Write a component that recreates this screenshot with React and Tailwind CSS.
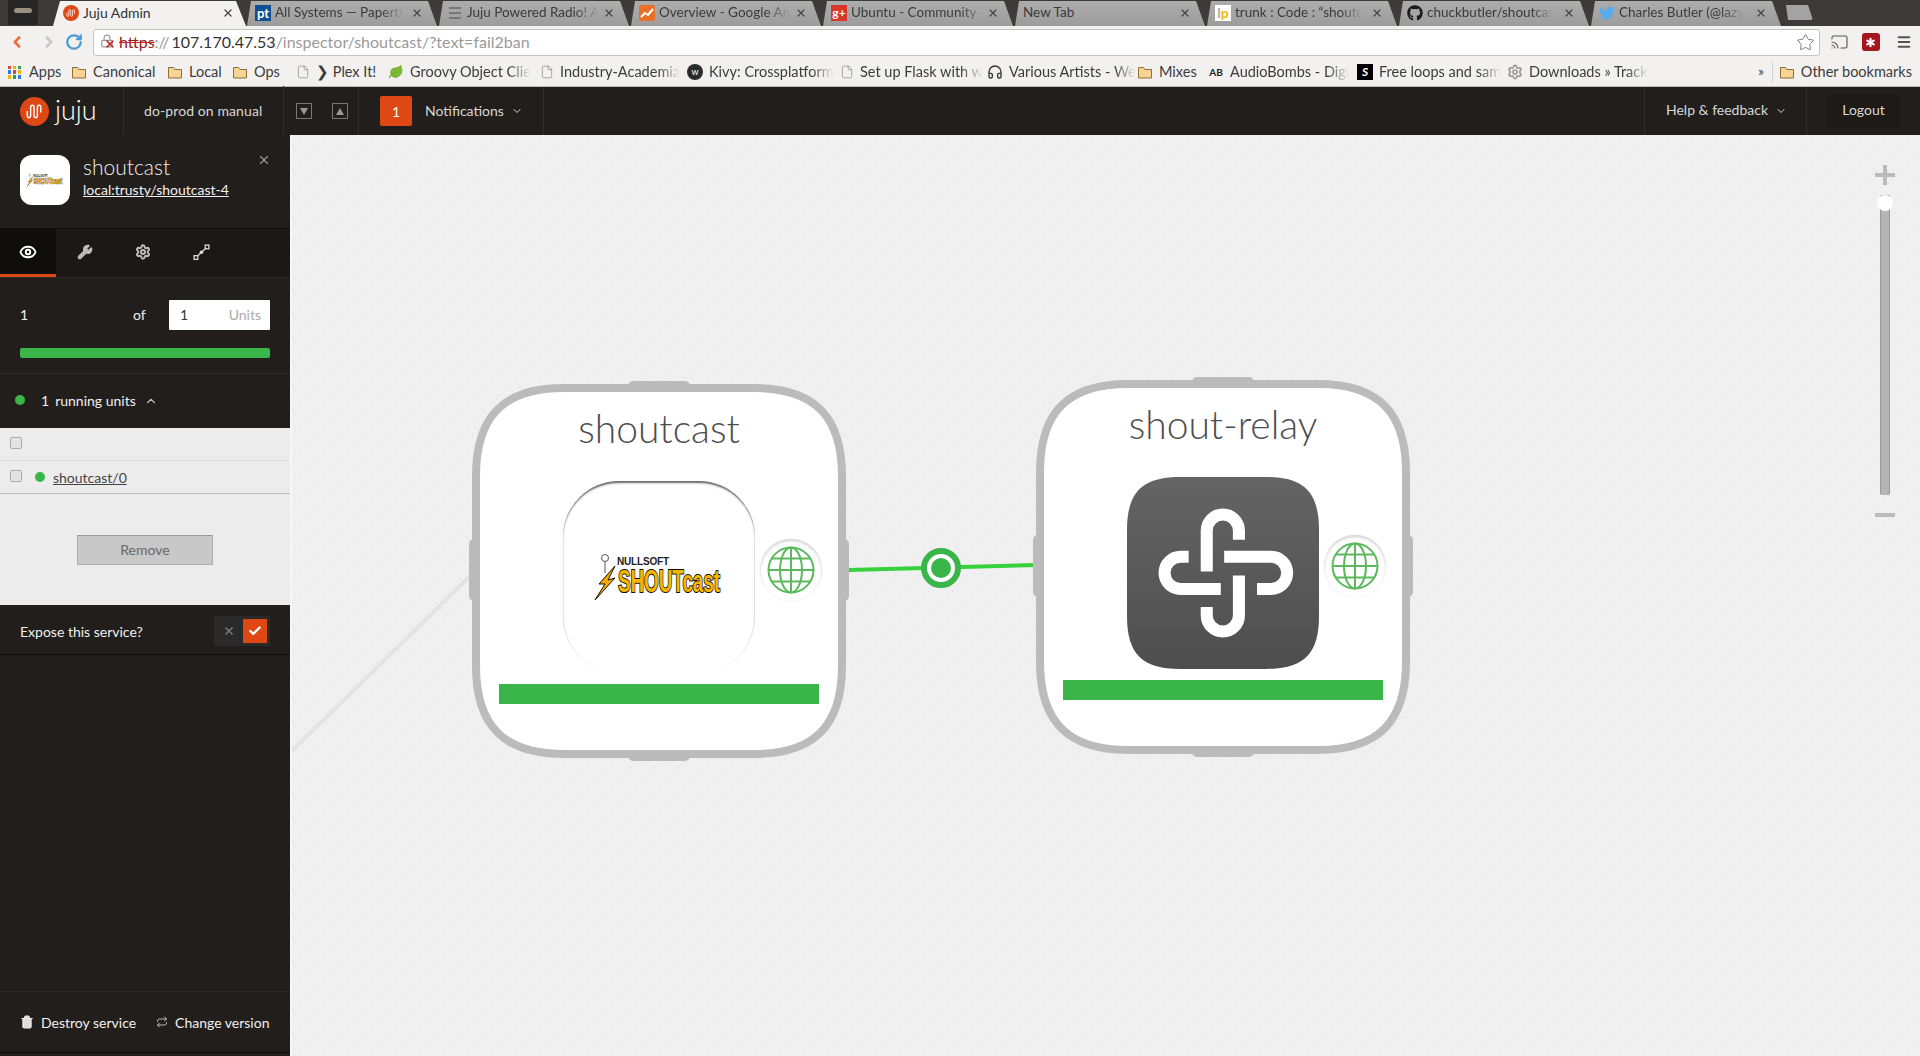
import React from 'react';
import { ChevronLeft, ChevronRight, ChevronDown, ChevronUp, RotateCw, Star, Cast, Menu, X, Eye, Wrench, Settings, Trash2, Repeat, Check, Lock, File, Headphones, Leaf, Asterisk } from 'lucide-react';
import { FaGithub, FaTwitter } from 'react-icons/fa';

const fade = '[mask-image:linear-gradient(to_right,black_82%,transparent)]';

const tabs = [
  { title: 'All Systems — Papertr', icon: 'pt' },
  { title: 'Juju Powered Radio! A', icon: 'lines' },
  { title: 'Overview - Google An', icon: 'ga' },
  { title: 'Ubuntu - Community -', icon: 'gplus' },
  { title: 'New Tab', icon: null },
  { title: 'trunk : Code : “shoutc', icon: 'lp' },
  { title: 'chuckbutler/shoutcas', icon: 'github' },
  { title: 'Charles Butler (@lazy', icon: 'twitter' },
];

const bookmarks = [
  { label: 'Canonical', icon: 'folder', w: 'w-[96px]' },
  { label: 'Local', icon: 'folder', w: 'w-[65px]' },
  { label: 'Ops', icon: 'folder', w: 'w-[64px]' },
  { label: '❯ Plex It!', icon: 'doc', w: 'w-[92px]' },
  { label: 'Groovy Object Clie', icon: 'leaf', w: 'w-[152px]', cut: true },
  { label: 'Industry-Academia', icon: 'doc', w: 'w-[147px]', cut: true },
  { label: 'Kivy: Crossplatform', icon: 'kivy', w: 'w-[153px]', cut: true },
  { label: 'Set up Flask with w', icon: 'doc', w: 'w-[147px]', cut: true },
  { label: 'Various Artists - We', icon: 'phones', w: 'w-[150px]', cut: true },
  { label: 'Mixes', icon: 'folder', w: 'w-[71px]' },
  { label: 'AudioBombs - Digi', icon: 'ab', w: 'w-[149px]', cut: true },
  { label: 'Free loops and sam', icon: 'loops', w: 'w-[150px]', cut: true },
  { label: 'Downloads » Track', icon: 'gear', w: 'w-[136px]', cut: true },
];

function JujuMark({ className }) {
  return (
    <svg viewBox="0 0 30 30" className={className}>
      <circle cx="15" cy="15" r="15" fill="#dd4814" />
      <path d="M7.5 15v4.5c0 2.5 3.5 2.5 3.5 0v-9c0-2.500 3.500-2.500 3.500 0v9c0 2.500 3.500 2.500 3.500 0v-9c0-2.500 3.500-2.500 3.500 0v5" fill="none" stroke="#fff" strokeWidth="1.5" strokeLinecap="round" />
    </svg>
  );
}

function Favicon({ kind }) {
  if (kind === 'pt') {
    return <div className="w-4 h-4 bg-[#0e4f96] text-white text-[13px] leading-4 font-bold text-center">pt</div>;
  }
  if (kind === 'lines') {
    return (
      <div className="w-4 h-4 flex flex-col justify-center gap-[3px] px-[2px]">
        <div className="h-[2px] bg-[#777]" />
        <div className="h-[2px] bg-[#777]" />
        <div className="h-[2px] bg-[#777]" />
      </div>
    );
  }
  if (kind === 'ga') {
    return (
      <svg viewBox="0 0 16 16" className="w-4 h-4">
        <rect width="16" height="16" rx="2" fill="#e8702a" />
        <path d="M2 12l4-4 3 2 5-6" fill="none" stroke="#fff" strokeWidth="2" />
      </svg>
    );
  }
  if (kind === 'gplus') {
    return <div className="w-4 h-4 bg-[#d9362a] text-white text-[12px] leading-4 font-bold text-center">g+</div>;
  }
  if (kind === 'lp') {
    return <div className="w-4 h-4 bg-white text-[#f5b400] text-[14px] leading-4 font-bold text-center"><span className="text-[#aaa]">l</span>p</div>;
  }
  if (kind === 'github') return <FaGithub className="w-4 h-4 text-[#1b1b1b]" />;
  if (kind === 'twitter') return <FaTwitter className="w-4 h-4 text-[#55acee]" />;
  return null;
}

function BookmarkIcon({ kind }) {
  if (kind === 'folder') {
    return (
      <svg viewBox="0 0 16 16" className="w-4 h-4 shrink-0">
        <path d="M1.500 3.500h5l1.500 2h6.500v8.500h-13z" fill="#f6d493" stroke="#8f6c34" />
      </svg>
    );
  }
  if (kind === 'doc') return <File className="w-[14px] h-4 shrink-0 text-[#888]" strokeWidth={1.2} />;
  if (kind === 'leaf') return <Leaf className="w-4 h-4 shrink-0 text-[#6aa82c] fill-[#7cba35]" strokeWidth={1} />;
  if (kind === 'kivy') {
    return <div className="w-4 h-4 shrink-0 rounded-full bg-[#2b2b2b] text-white text-[9px] leading-4 text-center">w</div>;
  }
  if (kind === 'phones') return <Headphones className="w-4 h-4 shrink-0 text-[#333]" strokeWidth={2} />;
  if (kind === 'ab') return <div className="w-4 h-4 shrink-0 text-[10px] leading-4 font-bold text-[#222] text-center">AB</div>;
  if (kind === 'loops') return <div className="w-4 h-4 shrink-0 bg-black text-white text-[12px] leading-4 font-bold italic text-center">S</div>;
  if (kind === 'gear') return <Settings className="w-4 h-4 shrink-0 text-[#999]" strokeWidth={2.500} />;
  return null;
}

function Tab({ tab }) {
  return (
    <div className="w-[192px] h-[25px] shrink-0 flex items-center pl-[9px] pr-[8px] pb-[2px] bg-gradient-to-b from-[#adadad] to-[#9c9c9c] text-[#3a3a3a] [clip-path:polygon(5px_0,calc(100%-10px)_0,calc(100%-1px)_100%,1px_100%)]">
      {tab.icon ? <div className="w-4 shrink-0 mr-[4px]"><Favicon kind={tab.icon} /></div> : null}
      <span className={`whitespace-nowrap text-[13.500px] ${tab.icon ? fade : ''}`}>{tab.title}</span>
      <X className="w-3 h-3 ml-auto mr-[7px] text-[#444]" strokeWidth={2.500} />
    </div>
  );
}

function ChromeBars() {
  return (
    <>
      {/* tab strip */}
      <div className="h-[26px] bg-[#3c3b37] flex items-end overflow-hidden">
        <div className="w-[53px] h-full shrink-0 pl-[8px]">
          <div className="w-[30px] h-[25px] bg-[#262626] rounded-b-[3px] flex justify-center pt-[8px]">
            <div className="w-[18px] h-[5px] bg-[#9b8f80] rounded-sm" />
          </div>
        </div>
        <div className="w-[193px] h-[25px] shrink-0 flex items-center pl-[10px] pr-[8px] pb-[2px] bg-[#f2f1f0] text-[#333] [clip-path:polygon(7px_0,calc(100%-10px)_0,100%_100%,0_100%)]">
          <JujuMark className="w-4 h-4 mr-[4px] shrink-0" />
          <span className="text-[14px] whitespace-nowrap">Juju Admin</span>
          <X className="w-3 h-3 ml-auto mr-[4px] text-[#444]" strokeWidth={2.500} />
        </div>
        {tabs.map((tab) => <Tab key={tab.title} tab={tab} />)}
        <div className="w-[30px] h-[15px] ml-[1px] mb-[6px] shrink-0 bg-[#a3a3a3] rounded-[3px] [clip-path:polygon(3px_0,calc(100%-5px)_0,100%_100%,5px_100%)]" />
      </div>

      {/* address bar */}
      <div className="h-[32px] bg-[#f2f1f0] flex items-center pl-[8px] pr-[8px]">
        <ChevronLeft className="w-[18px] h-[22px] text-[#e8743b]" strokeWidth={3.500} />
        <ChevronRight className="w-[18px] h-[22px] ml-[14px] text-[#c8c8c8]" strokeWidth={3.500} />
        <RotateCw className="w-[18px] h-[18px] ml-[7px] text-[#4d9ad4]" strokeWidth={3} />
        <div className="w-[1728px] h-[27px] ml-[10px] bg-white border border-[#c4c4c4] rounded-[3px] flex items-center pl-[6px] pr-[4px] text-[16px] whitespace-nowrap">
          <div className="relative w-[16px] h-[16px] shrink-0 mr-[3px]">
            <Lock className="w-[14px] h-[14px] text-[#999]" />
            <X className="absolute left-[4px] top-[4px] w-[12px] h-[12px] text-[#b22]" strokeWidth={3} />
          </div>
          <span className="text-[#8f2020] line-through decoration-[#c22]">https</span>
          <span className="text-[#999]">://</span>
          <span className="text-[#333] ml-[2px]">107.170.47.53</span>
          <span className="text-[#9a9a9a]">/inspector/shoutcast/?text=fail2ban</span>
          <Star className="w-[19px] h-[19px] ml-auto text-[#777]" strokeWidth={1.200} />
        </div>
        <Cast className="w-[19px] h-[18px] ml-[10px] text-[#555]" strokeWidth={1.500} />
        <div className="w-[18px] h-[18px] ml-[13px] bg-[#a3161e] rounded-[3px] flex items-center justify-center">
          <Asterisk className="w-[15px] h-[15px] text-white" strokeWidth={3.500} />
        </div>
        <Menu className="w-[16px] h-[20px] ml-[16px] text-[#555]" strokeWidth={3} />
      </div>

      {/* bookmarks */}
      <div className="h-[29px] bg-[#f2f1f0] border-b border-[#b9b9b9] flex items-center pl-[8px] pr-[8px] text-[14.500px] text-[#3c3c3c]">
        <div className="w-[63px] flex items-center gap-[8px] shrink-0">
          <div className="w-[13px] h-[13px] shrink-0 grid grid-cols-3 gap-[1.500px]">
            <div className="bg-[#e0453a]" /><div className="bg-[#f4b400]" /><div className="bg-[#2f9e55]" />
            <div className="bg-[#2f7de1]" /><div className="bg-[#e0453a]" /><div className="bg-[#f4b400]" />
            <div className="bg-[#f4b400]" /><div className="bg-[#2f9e55]" /><div className="bg-[#2f7de1]" />
          </div>
          <span>Apps</span>
        </div>
        {bookmarks.map((b) => (
          <div key={b.label} className={`${b.w} shrink-0 flex items-center gap-[6px]`}>
            <BookmarkIcon kind={b.icon} />
            <span className={`whitespace-nowrap ${b.cut ? fade : ''}`}>{b.label}</span>
          </div>
        ))}
        <span className="ml-auto mr-[8px] text-[13px]">»</span>
        <div className="border-l border-[#d4d4d4] pl-[6px] flex items-center gap-[6px]">
          <BookmarkIcon kind="folder" />
          <span className="whitespace-nowrap">Other bookmarks</span>
        </div>
      </div>
    </>
  );
}

function TopBar() {
  return (
    <div className="h-[48px] bg-[#221e1b] flex text-[14px] text-[#d8d8d8]">
      <div className="w-[124px] border-r border-[#322e2b] flex items-center pl-[20px] gap-[6px]">
        <JujuMark className="w-[29px] h-[29px]" />
        <span className="text-[27px] leading-none font-light text-white -mt-[4px]">juju</span>
      </div>
      <div className="w-[160px] border-r border-[#322e2b] flex items-center pl-[20px] -mt-[1px] tracking-[0.1px]">do-prod on manual</div>
      <div className="w-[75px] border-r border-[#322e2b] flex items-center pl-[12px] gap-[20px]">
        <div className="w-4 h-4 border border-[#777] flex items-center justify-center"><div className="border-x-[4px] border-x-transparent border-t-[7px] border-t-[#999]" /></div>
        <div className="w-4 h-4 border border-[#777] flex items-center justify-center"><div className="border-x-[4px] border-x-transparent border-b-[7px] border-b-[#999]" /></div>
      </div>
      <div className="w-[185px] border-r border-[#322e2b] flex items-center pl-[21px]">
        <div className="w-[32px] h-[30px] bg-[#dd4814] rounded-[2px] flex items-center justify-center text-white">1</div>
        <span className="ml-[13px] -mt-[2px]">Notifications</span>
        <ChevronDown className="w-[12px] h-[12px] ml-[7px]" />
      </div>
      <div className="flex-1" />
      <div className="w-[162px] border-l border-[#322e2b] flex items-center pl-[21px]">
        <span className="-mt-[3px]">Help &amp; feedback</span>
        <ChevronDown className="w-[12px] h-[12px] ml-[7px]" />
      </div>
      <div className="w-[114px] border-l border-[#322e2b] flex items-center pl-[20px]">
        <div className="w-[73px] h-[34px] bg-[#1d1a18] flex items-center justify-center -mt-[1px] pb-[2px]">Logout</div>
      </div>
    </div>
  );
}

function ShoutLogo({ className }) {
  return (
    <svg viewBox="0 0 128 46" className={`overflow-visible ${className}`}>
      <path d="M20 12L4 30l6 0L0 46l20-22-7 2z" fill="#f5a800" stroke="#111" strokeWidth="1" />
      <circle cx="10" cy="4" r="3.500" fill="none" stroke="#555" strokeWidth="1" />
      <path d="M10 7v12" stroke="#555" strokeWidth="1" />
      <text x="22" y="11" fontSize="10" fontWeight="700" fontFamily="'Liberation Sans',sans-serif" fill="#222" textLength="52">NULLSOFT</text>
      <text x="23" y="38" fontSize="31" fontWeight="700" fontFamily="'Liberation Sans',sans-serif" fill="#f7b500" stroke="#111" strokeWidth="2" paintOrder="stroke" textLength="102" lengthAdjust="spacingAndGlyphs">SHOUTcast</text>
    </svg>
  );
}

function RelationIcon() {
  return (
    <svg viewBox="0 0 16 16" className="w-[17px] h-[17px]" fill="none" stroke="#ddd" strokeWidth="1.200">
      <rect x="1" y="11" width="3.500" height="3.500" />
      <rect x="11.500" y="1" width="3.500" height="3.500" />
      <path d="M4.500 11L11.500 4.500" />
      <circle cx="8" cy="7.800" r="1.700" fill="#ddd" stroke="none" />
    </svg>
  );
}

function Sidebar() {
  return (
    <div className="w-[292px] shrink-0 box-border border-r-2 border-[#f7f7f7] bg-[#221e1b] flex flex-col text-[14px] text-[#f0f0f0]">
      <div className="h-[93px] shrink-0 flex items-start pt-[20px] pl-[20px] pr-[20px]">
        <div className="w-[50px] h-[50px] bg-white rounded-[12px] flex items-center justify-center shrink-0">
          <ShoutLogo className="w-[36px] h-[14px]" />
        </div>
        <div className="ml-[13px]">
          <div className="text-[21px] leading-[26px] font-light -mt-[1px]">shoutcast</div>
          <a className="underline leading-[20px] block">local:trusty/shoutcast-4</a>
        </div>
        <X className="w-[14px] h-[14px] ml-auto -mt-[2px] mr-[-1px] text-[#999]" strokeWidth={2} />
      </div>
      <div className="h-[49px] shrink-0 bg-[#1b1815] border-t border-[#0f0d0c] flex">
        <div className="w-[56px] border-b-[3px] border-[#dd4814] bg-[#100e0d] flex items-center justify-center">
          <Eye className="w-[18px] h-[18px] text-white" strokeWidth={2.500} />
        </div>
        <div className="w-[58px] flex items-center justify-center -mt-[2px]"><Wrench className="w-4 h-4 text-[#bbb] fill-[#bbb]" /></div>
        <div className="w-[58px] flex items-center justify-center -mt-[2px]"><Settings className="w-4 h-4 text-[#bbb]" strokeWidth={3} /></div>
        <div className="w-[58px] flex items-center justify-center -mt-[2px]"><RelationIcon /></div>
      </div>
      <div className="h-[96px] shrink-0 border-t border-[#2e2a27] px-[20px] pt-[22px]">
        <div className="flex items-center h-[30px]">
          <span className="w-[113px] -mt-[2px]">1</span>
          <span className="-mt-[2px]">of</span>
          <div className="w-[101px] h-[30px] ml-auto bg-white rounded-[1px] flex items-center justify-between pl-[11px] pr-[9px] pb-[2px] text-[#333]">
            <span>1</span>
            <span className="text-[#aaa]">Units</span>
          </div>
        </div>
        <div className="h-[10px] mt-[18px] bg-[#39b54a] rounded-[2px]" />
      </div>
      <div className="h-[55px] shrink-0 border-t border-[#2e2a27] flex items-center pl-[15px]">
        <div className="w-[10px] h-[10px] rounded-full bg-[#39b54a] -mt-[3px]" />
        <span className="ml-[16px] -mt-[1px]">1</span>
        <span className="ml-[6px] -mt-[1px]">running units</span>
        <ChevronUp className="w-[14px] h-[14px] ml-[8px] text-[#bbb]" />
      </div>
      <div className="h-[177px] shrink-0 bg-[#ececec] text-[#444]">
        <div className="h-[33px] border-b border-[#dcdcdc] flex items-center pl-[10px] pb-[3px]">
          <div className="w-[12px] h-[12px] rounded-[2px] border border-[#aaa] bg-[#e4e4e4]" />
        </div>
        <div className="h-[33px] border-b border-[#bdbdbd] flex items-center pl-[10px] pb-[3px]">
          <div className="w-[12px] h-[12px] rounded-[2px] border border-[#aaa] bg-[#e4e4e4]" />
          <div className="w-[10px] h-[10px] ml-[13px] mt-[3px] rounded-full bg-[#39b54a]" />
          <a className="ml-[8px] mt-[4px] underline">shoutcast/0</a>
        </div>
        <div className="flex justify-center pt-[41px]">
          <div className="w-[136px] h-[30px] bg-[#c8c8c8] border border-[#adadad] border-t-[#999] rounded-[1px] flex items-center justify-center pb-[2px] text-[#666]">Remove</div>
        </div>
      </div>
      <div className="h-[50px] shrink-0 border-b border-[#0f0d0c] flex items-center px-[20px] pt-[3px]">
        <span className="mt-[1px]">Expose this service?</span>
        <div className="w-[56px] h-[30px] ml-auto bg-[#2a2a2a] rounded-[2px] flex items-center pl-[9px]">
          <X className="w-[12px] h-[12px] text-[#777]" strokeWidth={3.500} />
          <div className="w-[24px] h-[24px] ml-[8px] bg-[#dd4814] flex items-center justify-center">
            <Check className="w-[14px] h-[14px] text-white" strokeWidth={4} />
          </div>
        </div>
      </div>
      <div className="flex-1" />
      <div className="h-[62px] shrink-0 mb-[3px] border-t border-[#2e2a27] border-b-[#0f0d0c] border-b flex items-center pl-[20px]">
        <Trash2 className="w-[14px] h-[14px] text-[#eee] fill-[#ddd]" />
        <span className="ml-[7px]">Destroy service</span>
        <Repeat className="w-[12px] h-[12px] ml-[20px] text-[#bbb]" />
        <span className="ml-[7px]">Change version</span>
      </div>
    </div>
  );
}

function Squircle() {
  return (
    <svg viewBox="0 0 374 374" className="absolute inset-0 w-full h-full overflow-visible">
      <g fill="#bbb">
        <rect x="156" y="-3" width="62" height="12" rx="5" />
        <rect x="156" y="365" width="62" height="12" rx="5" />
        <rect x="-3" y="155" width="12" height="62" rx="5" />
        <rect x="365" y="155" width="12" height="62" rx="5" />
      </g>
      <path d="M92 4H282C342 4 370 32 370 92V282C370 342 342 370 282 370H92C32 370 4 342 4 282V92C4 32 32 4 92 4Z" fill="#fff" stroke="#bbb" strokeWidth="8" />
    </svg>
  );
}

function GlobeBadge({ className }) {
  return (
    <div className={`absolute w-[62px] h-[62px] rounded-full bg-white shadow-[inset_0_2px_3px_rgba(0,0,0,0.18),0_0_2px_rgba(0,0,0,0.08)] flex items-center justify-center ${className}`}>
      <svg viewBox="0 0 48 48" className="w-[48px] h-[48px]" fill="none" stroke="#5cb85c" strokeWidth="2">
        <circle cx="24" cy="24" r="22.500" />
        <ellipse cx="24" cy="24" rx="11" ry="22.500" />
        <path d="M24 1.500V46.500M1.500 24H46.500M5 12.500H43M5 35.500H43" />
      </svg>
    </div>
  );
}

function KnotIcon() {
  return (
    <svg viewBox="322 320 573 573" className="w-full h-full">
      <defs>
        <linearGradient id="relayBg" x1="0" y1="0" x2="0" y2="1">
          <stop offset="0" stopColor="#646464" />
          <stop offset="1" stopColor="#4e4e4e" />
        </linearGradient>
      </defs>
      <path d="M480 320H737C850 320 895 365 895 478V735C895 848 850 893 737 893H480C367 893 322 848 322 735V478C322 365 367 320 480 320Z" fill="url(#relayBg)" />
      <g fill="none" stroke="#fff" strokeWidth="36">
        <path d="M560 602V480A48 48 0 0 1 656 480V507" />
        <path d="M612 558H752A48 48 0 0 1 752 654H710" />
        <path d="M656 614V733A48 48 0 0 1 560 733V708" />
        <path d="M602 654H482A48 48 0 0 1 482 558H506" />
      </g>
    </svg>
  );
}

function ServiceBlock({ name, className, children }) {
  return (
    <div className={`absolute w-[374px] h-[374px] ${className}`}>
      <Squircle />
      <div className="relative flex flex-col items-center">
        <div className="mt-[20px] h-[50px] text-[39px] leading-[48px] font-light text-[#4d4d4d]">{name}</div>
        <div className="w-[192px] h-[192px] mt-[27px]">{children}</div>
        <div className="w-[320px] h-[20px] mt-[11px] bg-[#39b54a]" />
      </div>
      <GlobeBadge className="left-[288px] top-[155px]" />
    </div>
  );
}

function Canvas() {
  return (
    <div className="relative flex-1 bg-[#f0f0f0] overflow-hidden">
      <svg className="absolute inset-0 w-full h-full">
        <defs>
          <pattern id="dots" width="24" height="24" patternUnits="userSpaceOnUse">
            <path d="M0 12L12 0L24 12L12 24Z" fill="none" stroke="#e0e0e0" strokeWidth="1" strokeDasharray="1.400 2.800" />
            <rect x="11" y="11" width="2" height="2" fill="#e4e4e4" />
          </pattern>
        </defs>
        <rect width="100%" height="100%" fill="url(#dots)" />
        <path d="M178 441L-1 617" stroke="#e3e3e3" strokeWidth="4" />
        <path d="M557 435L745 430" stroke="#36d13c" strokeWidth="4" />
        <circle cx="649" cy="433" r="17" fill="#fff" stroke="#39b54a" strokeWidth="6" />
        <circle cx="649" cy="433" r="10" fill="#39b54a" />
      </svg>

      <ServiceBlock name="shoutcast" className="left-[180px] top-[249px]">
        <div className="w-full h-full rounded-[56px] bg-white shadow-[inset_0_3px_2px_-1px_rgba(0,0,0,0.6),inset_2px_0_2px_-2px_rgba(0,0,0,0.3),inset_-2px_0_2px_-2px_rgba(0,0,0,0.3)] flex items-center justify-center">
          <ShoutLogo className="w-[128px] h-[46px]" />
        </div>
      </ServiceBlock>
      <ServiceBlock name="shout-relay" className="left-[744px] top-[245px]">
        <KnotIcon />
      </ServiceBlock>

      {/* zoom control */}
      <div className="absolute right-[25px] top-[30px] w-5 flex flex-col items-center">
        <svg viewBox="0 0 20 20" className="w-5 h-5"><path d="M10 0V20M0 10H20" stroke="#bbb" strokeWidth="4" /></svg>
        <div className="relative w-[10px] h-[300px] mt-[10px] bg-[#b5b5b5] border-x border-[#999] rounded-[2px]">
          <div className="absolute -left-[4px] top-0 w-4 h-4 rounded-full bg-white" />
        </div>
        <div className="w-5 h-[4px] mt-[18px] bg-[#bbb]" />
      </div>
    </div>
  );
}

export default function App() {
  return (
    <div className="w-[1920px] h-[1056px] overflow-hidden flex flex-col font-[Lato,sans-serif]">
      <ChromeBars />
      <TopBar />
      <div className="flex-1 flex min-h-0">
        <Sidebar />
        <Canvas />
      </div>
    </div>
  );
}
